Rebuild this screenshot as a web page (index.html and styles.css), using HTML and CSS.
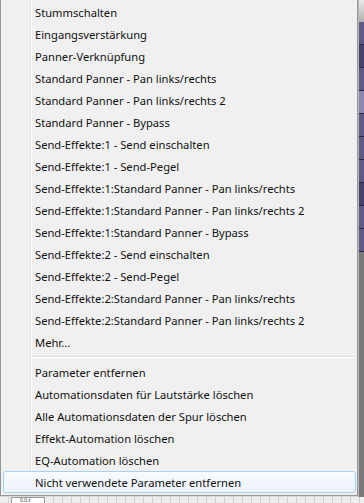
FILE: index.html
```html
<!DOCTYPE html>
<html lang="de">

<head>
    <meta charset="UTF-8">
    <meta name="viewport" content="width=device-width, initial-scale=1.0">
    <title>Kontextmenü</title>
    <link rel="stylesheet" href="styles.css">
</head>

<body>
    <div class="screen">
        <div class="menu">
            <div class="item">Stummschalten</div>
            <div class="item">Eingangsverstärkung</div>
            <div class="item">Panner-Verknüpfung</div>
            <div class="item">Standard Panner - Pan links/rechts</div>
            <div class="item">Standard Panner - Pan links/rechts 2</div>
            <div class="item">Standard Panner - Bypass</div>
            <div class="item">Send-Effekte:1 - Send einschalten</div>
            <div class="item">Send-Effekte:1 - Send-Pegel</div>
            <div class="item">Send-Effekte:1:Standard Panner - Pan links/rechts</div>
            <div class="item">Send-Effekte:1:Standard Panner - Pan links/rechts 2</div>
            <div class="item">Send-Effekte:1:Standard Panner - Bypass</div>
            <div class="item">Send-Effekte:2 - Send einschalten</div>
            <div class="item">Send-Effekte:2 - Send-Pegel</div>
            <div class="item">Send-Effekte:2:Standard Panner - Pan links/rechts</div>
            <div class="item">Send-Effekte:2:Standard Panner - Pan links/rechts 2</div>
            <div class="item">Mehr...</div>
            <div class="sep"></div>
            <div class="item">Parameter entfernen</div>
            <div class="item">Automationsdaten für Lautstärke löschen</div>
            <div class="item">Alle Automationsdaten der Spur löschen</div>
            <div class="item">Effekt-Automation löschen</div>
            <div class="item">EQ-Automation löschen</div>
            <div class="item hover">Nicht verwendete Parameter entfernen</div>
        </div>
        <div class="side">
            <div class="side-top"></div>
            <div class="track"></div>
            <div class="track dark"></div>
            <div class="track"></div>
            <div class="track light"></div>
            <div class="track"></div>
            <div class="track"></div>
            <div class="track"></div>
            <div class="track dark"></div>
            <div class="track"></div>
            <div class="track"></div>
        </div>
    </div>
    <div class="bottom">
        <div class="tab">0.0.t</div>
    </div>
</body>

</html>
```

FILE: styles.css
```css
body {
    margin: 0;
    padding: 0;
    width: 364px;
    height: 503px;
    overflow: hidden;
    background-color: #d8d8d8;
    font-family: 'Noto Sans', 'Segoe UI', sans-serif;
    font-size: 11.2px;
    color: #111;
}

.screen {
    display: flex;
    height: 497px;
}

.menu {
    width: 358px;
    height: 496px;
    padding-top: 1px;
    box-sizing: border-box;
    background-color: #f0f0f0;
    border-left: 1px solid #979797;
    border-right: 1px solid #979797;
    border-bottom: 1px solid #979797;
    /* icon gutter line */
    background-image: linear-gradient(to right, transparent 29px, #e2e3e3 29px, #e2e3e3 30px, #ffffff 30px, #ffffff 31px, transparent 31px);
}

.item {
    height: 22px;
    line-height: 22px;
    padding-left: 31px;
    white-space: nowrap;
    margin: 0 1px 0 2px;
    border: 1px solid transparent;
    border-radius: 3px;
    box-sizing: border-box;
}

.item.hover {
    border-color: #a8d1f0;
    background: linear-gradient(#f8fbfe, #ecf3fa);
}

.sep {
    height: 8px;
    margin-left: 31px;
    margin-right: 2px;
    background: linear-gradient(transparent 3px, #e0e0e0 3px, #e0e0e0 4px, #ffffff 4px, #ffffff 5px, transparent 5px);
}

.side {
    flex: 1;
    display: flex;
    flex-direction: column;
    background-color: #7a7a7a;
    border-left: 1px solid #b8b8b8;
}

.side-top {
    height: 22px;
    background: linear-gradient(#e8e8e8, #b0b0b0);
}

.track {
    height: 22px;
    background-color: #5d5a86;
    border-bottom: 1px solid #2a2840;
}

.track.dark {
    background-color: #45436a;
}

.track.light {
    background-color: #8a88b0;
}

.bottom {
    height: 6px;
    background-color: #eeeeee;
    background-image: repeating-linear-gradient(to right, transparent 0, transparent 8px, #cfcfcf 8px, #cfcfcf 9px);
    display: flex;
    padding-left: 11px;
}

.tab {
    width: 34px;
    height: 6px;
    background-color: #ffffff;
    border: 1px solid #9a9a9a;
    border-bottom: none;
    font-size: 5px;
    line-height: 5px;
    padding-left: 8px;
    box-sizing: border-box;
    color: #333;
}
```
